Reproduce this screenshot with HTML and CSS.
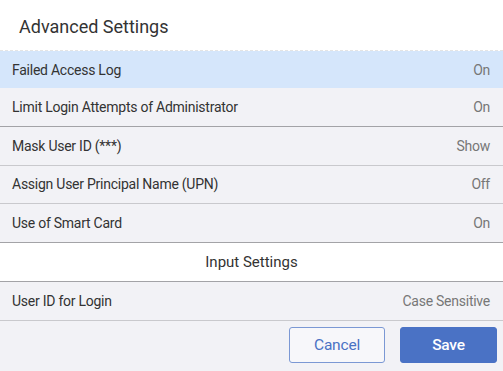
FILE: index.html
```html
<!DOCTYPE html>
<html>
<head>
<meta charset="utf-8">
<link rel="stylesheet" href="styles.css">
</head>
<body>
<div class="dialog">
  <div class="header">Advanced Settings</div>
  <div class="list">
    <div class="row selected"><span class="label">Failed Access Log</span><span class="value">On</span></div>
    <div class="row strong"><span class="label">Limit Login Attempts of Administrator</span><span class="value">On</span></div>
    <div class="row"><span class="label">Mask User ID (***)</span><span class="value">Show</span></div>
    <div class="row"><span class="label">Assign User Principal Name (UPN)</span><span class="value">Off</span></div>
    <div class="row strong"><span class="label">Use of Smart Card</span><span class="value">On</span></div>
    <div class="section strong">Input Settings</div>
    <div class="row"><span class="label">User ID for Login</span><span class="value">Case Sensitive</span></div>
  </div>
  <div class="footer">
    <button class="btn cancel">Cancel</button>
    <button class="btn save">Save</button>
  </div>
</div>
</body>
</html>
```
FILE: styles.css
```css
html, body {
  margin: 0;
  padding: 0;
  width: 503px;
  height: 371px;
  overflow: hidden;
  background: #f2f2f6;
  font-family: Roboto, "Liberation Sans", sans-serif;
}
.dialog {
  display: flex;
  flex-direction: column;
  height: 371px;
}
.header {
  box-sizing: border-box;
  background: #ffffff;
  border-bottom: 1px dashed #e4e4e4;
  height: 51px;
  padding: 2px 0 0 19px;
  display: flex;
  align-items: center;
  font-size: 18px;
  color: #333333;
}
.list {
  display: flex;
  flex-direction: column;
}
.row {
  box-sizing: border-box;
  height: 38.8px;
  display: flex;
  align-items: center;
  justify-content: space-between;
  padding: 0 13px 0 12px;
  background: #f2f2f6;
  border-bottom: 1px solid #c9c9cd;
  font-size: 14px;
  letter-spacing: -0.25px;
}
.row.selected {
  background: #d5e6fb;
  border-bottom: none;
  height: 37px;
}
.row.strong, .section.strong {
  border-bottom-color: #a3a3a7;
}
.label {
  color: #333333;
}
.value {
  color: #777777;
}
.section {
  box-sizing: border-box;
  height: 38.8px;
  background: #ffffff;
  border-bottom: 1px solid #a3a3a7;
  display: flex;
  align-items: center;
  justify-content: center;
  font-size: 15px;
  color: #333333;
}
.footer {
  flex: 1;
  display: flex;
  justify-content: flex-end;
  align-items: flex-start;
  gap: 15px;
  padding: 6px 6px 0 0;
}
.btn {
  height: 36px;
  border-radius: 3px;
  font-family: Roboto, "Liberation Sans", sans-serif;
  font-size: 15.5px;
  letter-spacing: -0.2px;
  padding: 0;
  cursor: pointer;
}
.cancel {
  width: 96px;
  background: #f7f7fa;
  border: 1px solid #7b98d4;
  color: #4a72c4;
}
.save {
  width: 97px;
  background: #4a72c5;
  border: 1px solid #4a72c5;
  color: #ffffff;
  font-weight: 500;
}
```
